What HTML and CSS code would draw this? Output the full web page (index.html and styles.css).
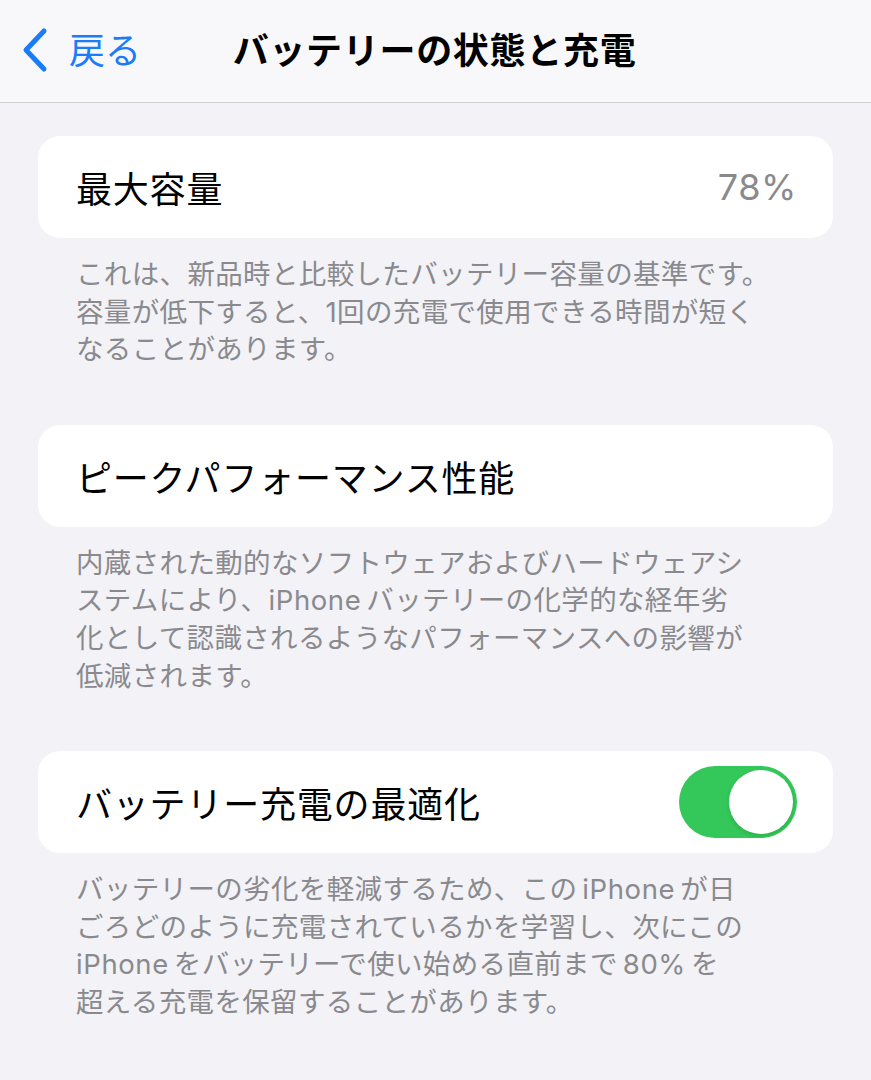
FILE: index.html
```html
<!DOCTYPE html>
<html lang="ja">
<head>
<meta charset="utf-8">
<link rel="stylesheet" href="styles.css">
</head>
<body>
<header class="nav">
  <div class="back">
    <svg class="chev" width="30" height="48" viewBox="0 0 30 48"><path d="M24 4 L6 23 L24 42" fill="none" stroke="#1a7cf7" stroke-width="5" stroke-linecap="round" stroke-linejoin="round"/></svg>
    <span class="back-label">戻る</span>
  </div>
  <h1 class="title">バッテリーの状態と充電</h1>
</header>
<main class="content">
  <section class="group">
    <div class="card">
      <span class="label">最大容量</span>
      <span class="value">78%</span>
    </div>
    <p class="footer">これは、新品時と比較したバッテリー容量の基準です。<br>容量が低下すると、1回の充電で使用できる時間が短く<br>なることがあります。</p>
  </section>
  <section class="group">
    <div class="card">
      <span class="label">ピークパフォーマンス性能</span>
    </div>
    <p class="footer">内蔵された動的なソフトウェアおよびハードウェアシ<br>ステムにより、<span class="lat first">iPhone</span>バッテリーの化学的な経年劣<br>化として認識されるようなパフォーマンスへの影響が<br>低減されます。</p>
  </section>
  <section class="group">
    <div class="card">
      <span class="label">バッテリー充電の最適化</span>
      <span class="toggle"><span class="knob"></span></span>
    </div>
    <p class="footer">バッテリーの劣化を軽減するため、この<span class="lat">iPhone</span>が日<br>ごろどのように充電されているかを学習し、次にこの<br><span class="lat first">iPhone</span>をバッテリーで使い始める直前まで<span class="lat">80%</span>を<br>超える充電を保留することがあります。</p>
  </section>
</main>
</body>
</html>
```

FILE: styles.css
```css
* { box-sizing: border-box; }
html, body {
  margin: 0;
  padding: 0;
  background: #f2f2f7;
  font-family: "Inter", "Noto Sans CJK JP", sans-serif;
  -webkit-font-smoothing: antialiased;
}
.nav {
  height: 103px;
  background: #f8f8fa;
  border-bottom: 1px solid #cfcfd3;
  display: flex;
  align-items: center;
  justify-content: center;
  position: relative;
}
.back {
  position: absolute;
  left: 20px;
  top: 27px;
  display: flex;
  align-items: center;
  gap: 19px;
}
.chev { display: block; }
.back-label {
  color: #1a7cf7;
  font-size: 36px;
  line-height: 48px;
  letter-spacing: 0;
}
.title {
  margin: 0;
  font-size: 36px;
  font-weight: 700;
  color: #000;
  line-height: 48px;
  letter-spacing: 0.7px;
  padding-right: 2px;
}
.content {
  padding: 33px 38px 0 38px;
  display: flex;
  flex-direction: column;
  gap: 56px;
}
.card {
  background: #fff;
  border-radius: 22px;
  height: 102px;
  display: flex;
  align-items: center;
  justify-content: space-between;
  padding: 0 36px 0 38px;
}
.label {
  font-size: 36px;
  color: #000;
  letter-spacing: 0.8px;
}
.value {
  font-size: 36px;
  color: #8a8a8e;
  letter-spacing: 0.6px;
}
.footer {
  margin: 18px 0 0 0;
  padding-left: 38px;
  font-size: 27.5px;
  line-height: 37.6px;
  color: #8a8a8e;
  letter-spacing: 0.35px;
}
.lat {
  margin: 0 5px;
  letter-spacing: 0.6px;
}
.lat.first { margin-left: 0; }
.toggle {
  width: 118px;
  height: 72px;
  border-radius: 36px;
  background: #34c759;
  display: flex;
  align-items: center;
  justify-content: flex-end;
  padding-right: 4px;
}
.knob {
  width: 64px;
  height: 64px;
  border-radius: 50%;
  background: #fff;
  box-shadow: 0 2px 4px rgba(0,0,0,0.12);
}
```
